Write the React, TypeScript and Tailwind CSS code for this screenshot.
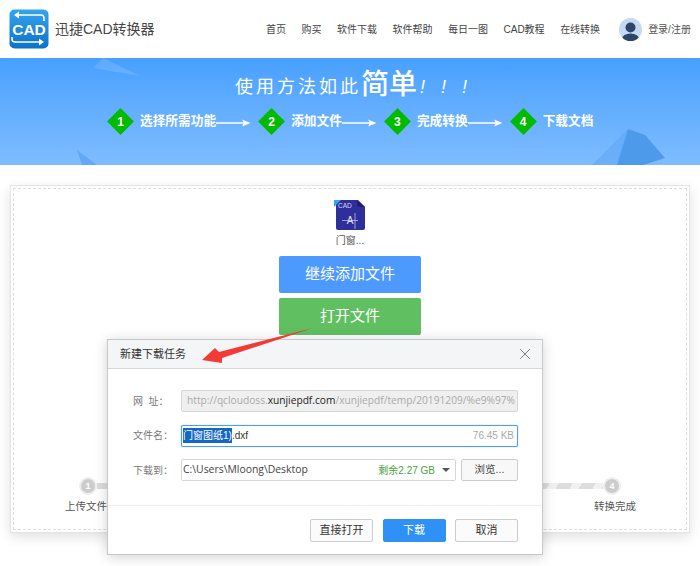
import React from 'react';
import { X } from 'lucide-react';

const font = { fontFamily: '"Liberation Sans", "Noto Sans CJK SC", sans-serif' };
const inputFont = { fontFamily: '"Open Sans", "Noto Sans CJK SC", sans-serif' };

const navItems = ['首页', '购买', '软件下载', '软件帮助', '每日一图', 'CAD教程', '在线转换'];
const steps = ['选择所需功能', '添加文件', '完成转换', '下载文档'];

const Logo = () => (
    <svg width="40" height="40" viewBox="0 0 40 40" className="shrink-0">
        <defs>
            <linearGradient id="logoBg" x1="0" y1="0" x2="0" y2="1">
                <stop offset="0" stopColor="#35a4ee" />
                <stop offset="1" stopColor="#0b72c9" />
            </linearGradient>
        </defs>
        <rect x="0.5" y="0.5" width="39" height="39" rx="5" fill="url(#logoBg)" />
        <path d="M35 12 V9 Q35 6 32 6 H8" stroke="#fff" strokeWidth="1.6" fill="none" />
        <path d="M10 2.5 L5 6 L10 9.5 Z" fill="#fff" />
        <path d="M3 28 V30 Q3 33 6 33 H31" stroke="#fff" strokeWidth="1.6" fill="none" />
        <path d="M30 29.5 L35 33 L30 36.5 Z" fill="#fff" />
        <text x="20" y="25.5" textAnchor="middle" fill="#fff" fontSize="15.5" fontWeight="700" fontFamily="Liberation Sans">CAD</text>
    </svg>
);

const Avatar = () => (
    <svg width="23" height="23" viewBox="0 0 23 23" className="shrink-0">
        <circle cx="11.5" cy="11.5" r="11.5" fill="#c5d9f3" />
        <clipPath id="avatarClip"><circle cx="11.5" cy="11.5" r="11.5" /></clipPath>
        <g clipPath="url(#avatarClip)" fill="#2e4567">
            <circle cx="11.5" cy="9.5" r="5" />
            <ellipse cx="11.5" cy="21" rx="8.5" ry="5.5" />
        </g>
    </svg>
);

const Diamond = ({ n }: { n: number }) => (
    <div className="relative w-[27px] h-[27px] shrink-0 flex items-center justify-center">
        <div className="absolute w-[19px] h-[19px] rotate-45 bg-[#00bb00]" />
        <span className="relative text-white text-[12px] font-bold">{n}</span>
    </div>
);

const StepArrow = () => (
    <svg width="35" height="8" viewBox="0 0 35 8" className="shrink-0 mt-[3px]">
        <path d="M0 4 H29" stroke="#fff" strokeWidth="1.5" />
        <path d="M26 0.6 L34.5 4 L26 7.4 L28 4 Z" fill="#fff" />
    </svg>
);

const FileIcon = () => (
    <svg width="31" height="30" viewBox="0 0 31 30" className="-ml-[2px]">
        <path d="M2 0 H24 L31 7 V28 Q31 30 29 30 H4 Q2 30 2 28 Z" fill="#2f2f9c" />
        <path d="M23 0 V4 Q23 7 26 7 H31 Z" fill="#1e1e6e" />
        <path d="M0 0 H7 L0 7 Z" fill="#3fa0ee" />
        <text x="4" y="8" fill="#d8d8f2" fontSize="6.5" fontFamily="Liberation Sans">CAD</text>
        <text x="16" y="24" textAnchor="middle" fill="#e5e5f8" fontSize="10" fontFamily="Liberation Sans">A</text>
        <path d="M8 20.5 H24 M21 13 V29" stroke="#e5e5f8" strokeWidth="0.6" />
    </svg>
);

const DialogButton = ({ label, primary }: { label: string; primary?: boolean }) => (
    <button
        className={`w-[63px] h-[23px] rounded-[2px] text-[11px] ${
            primary
                ? 'bg-[#2f91f5] text-white border border-[#2f91f5]'
                : 'bg-[#fbfbfb] text-[#333] border border-[#cccccc]'
        }`}
    >
        {label}
    </button>
);

const Label = ({ children }: { children: React.ReactNode }) => (
    <span className="w-[48px] ml-[25px] text-left text-[10px] text-[#777] shrink-0 whitespace-pre">{children}</span>
);

const Dialog = () => (
    <div className="absolute left-[107px] top-[339px] w-[436px] h-[216px] flex flex-col bg-white border border-[#c8c8c8] shadow-[0_2px_12px_rgba(0,0,0,0.18)]">
        <div className="h-[29px] shrink-0 flex items-center justify-between pl-[12px] pr-[8px] bg-[#f4f5f7] border-b border-[#d5d7da]">
            <span className="text-[11px] text-[#333]">新建下载任务</span>
            <X size={18} strokeWidth={1.1} className="text-[#666]" />
        </div>
        <div className="flex-1 flex flex-col gap-[12.5px] pt-[21px] pr-[24px]">
            <div className="flex items-center h-[22px]">
                <Label>{'网  址：'}</Label>
                <div className="flex-1 min-w-0 h-full flex items-center pl-[5px] bg-[#efefef] border border-[#d6d6d6] rounded-[2px] text-[10.2px] text-[#aaa] overflow-hidden whitespace-nowrap" style={inputFont}>
                    http://qcloudoss.<span className="text-[#222]">xunjiepdf.com</span>/xunjiepdf/temp/20191209/%e9%97%
                </div>
            </div>
            <div className="flex items-center h-[22px]">
                <Label>文件名：</Label>
                <div className="flex-1 min-w-0 h-full flex items-center justify-between pl-[1px] pr-[3px] bg-white border border-[#4a9ff0] shadow-[0_0_1px_#4a9ff0] rounded-[2px] text-[10px] text-[#333]">
                    <span className="flex items-center">
                        <span className="bg-[#1467c4] text-white">门窗图纸1)</span>.dxf
                    </span>
                    <span className="text-[#aaa] text-[10px]">76.45 KB</span>
                </div>
            </div>
            <div className="flex items-center h-[22px]">
                <Label>下载到：</Label>
                <div className="flex-1 min-w-0 h-full flex items-center justify-between pl-[1px] pr-[5px] bg-white border border-[#d6d6d6] rounded-[2px] text-[10.5px] text-[#444]">
                    <span className="text-[10.4px]" style={inputFont}>C:\Users\Mloong\Desktop</span>
                    <span className="flex items-center gap-[7px]">
                        <span className="text-[#4aa23c] text-[10px]">剩余2.27 GB</span>
                        <span className="w-0 h-0 border-x-[4px] border-x-transparent border-t-[4px] border-t-[#555]" />
                    </span>
                </div>
                <button className="ml-[5px] w-[57px] h-full shrink-0 bg-[#f8f8f8] border border-[#cccccc] rounded-[2px] text-[10.5px] text-[#444]">浏览...</button>
            </div>
        </div>
        <div className="h-[49px] shrink-0 flex items-center justify-end gap-[9.5px] pr-[24px] border-t border-[#eeeeee]">
            <DialogButton label="直接打开" />
            <DialogButton label="下载" primary />
            <DialogButton label="取消" />
        </div>
    </div>
);

const App: React.FC = () => {
    return (
        <div className="relative w-[700px] h-[566px] overflow-hidden bg-white" style={font}>
            <header className="h-[58px] flex items-center pl-[9px]">
                <Logo />
                <span className="ml-[6px] w-[99px] text-[14px] text-[#444] whitespace-nowrap">迅捷CAD转换器</span>
                <nav className="ml-[112px] flex items-center gap-[15.5px] text-[10px] text-[#444] whitespace-nowrap">
                    {navItems.map((item) => (
                        <span key={item}>{item}</span>
                    ))}
                </nav>
                <div className="ml-[19px] flex items-center gap-[6px] text-[10px] text-[#555] whitespace-nowrap">
                    <Avatar />
                    <span>登录/注册</span>
                </div>
            </header>

            <section className="relative h-[107px] overflow-hidden bg-gradient-to-b from-[#47a0ff] to-[#7ebcff] flex flex-col items-start">
                <svg className="absolute inset-0" width="700" height="107" viewBox="0 0 700 107">
                    <path d="M93 10 L103 0 L140 18 Z" fill="#ffffff" fillOpacity="0.12" />
                    <path d="M77 92 L97 107 L82 107 Z" fill="#4b96ee" fillOpacity="0.5" />
                    <path d="M592 107 L628 71 L617 107 Z" fill="#4f9cef" fillOpacity="0.35" />
                    <path d="M617 107 L628 71 L645 77 L665 100 L643 107 Z" fill="#4e9aea" />
                </svg>
                <div className="relative ml-[235px] h-[54px] flex items-center text-white pt-[5px] whitespace-nowrap">
                    <span className="text-[18px] tracking-[3px]">使用方法如此</span>
                    <span className="text-[28px] font-medium -mt-[5px]">简单</span>
                    <span className="ml-[3px] text-[18px] italic tracking-[16px]">!!!</span>
                </div>
                <div className="relative ml-[107px] flex items-center text-white text-[12.7px] font-bold whitespace-nowrap -mt-[4px]">
                    {steps.map((step, i) => (
                        <div key={step} className="flex items-center">
                            <Diamond n={i + 1} />
                            <span className="ml-[6px]">{step}</span>
                            {i < steps.length - 1 && <StepArrow />}
                            {i < steps.length - 1 && <span className="w-[7px]" />}
                        </div>
                    ))}
                </div>
            </section>

            <main className="mx-[10px] mt-[20px] h-[348px] p-[2px] bg-white border border-[#e4e4e4] shadow-[0_4px_12px_rgba(0,0,0,0.12)]">
                <div className="h-full flex flex-col items-center border border-dashed border-[#dddddd]">
                    <div className="mt-[11px]"><FileIcon /></div>
                    <span className="mt-[3px] text-[10px] text-[#555]">门窗...</span>
                    <button className="mt-[8px] w-[142px] h-[37px] rounded-[2px] bg-[#4d9aff] text-white text-[15px]">继续添加文件</button>
                    <button className="mt-[5px] w-[142px] h-[37px] rounded-[2px] bg-[#60bf60] text-white text-[15px]">打开文件</button>
                    <div className="mt-auto mb-[14px] w-full flex justify-between pl-[50px] pr-[49px] text-[10.5px] text-[#555]">
                        <div className="flex flex-col items-center w-[44px]">
                            <div className="ml-[4px] w-[14px] h-[14px] rounded-full bg-[#cccccc] border-[2px] border-[#eeeeee] box-content text-white text-[9px] font-bold flex items-center justify-center">1</div>
                            <span className="mt-[4px] whitespace-nowrap">上传文件</span>
                        </div>
                        <div className="flex-1 mt-[6px] -ml-[11px] -mr-[10px] h-[6px] bg-[repeating-linear-gradient(120deg,#dddddd_0,#dddddd_12px,#f1f1f1_12px,#f1f1f1_20px)]" />
                        <div className="flex flex-col items-center w-[44px]">
                            <div className="mr-[6px] w-[14px] h-[14px] rounded-full bg-[#cccccc] border-[2px] border-[#eeeeee] box-content text-white text-[9px] font-bold flex items-center justify-center">4</div>
                            <span className="mt-[4px] whitespace-nowrap">转换完成</span>
                        </div>
                    </div>
                </div>
            </main>

            <Dialog />

            <svg className="absolute left-0 top-0 pointer-events-none" width="700" height="566" viewBox="0 0 700 566">
                <path d="M202 360 L215 348 L219 352 L313 328 L222 358 L222 363 Z" fill="#f23a36" />
            </svg>
        </div>
    );
};

export default App;
